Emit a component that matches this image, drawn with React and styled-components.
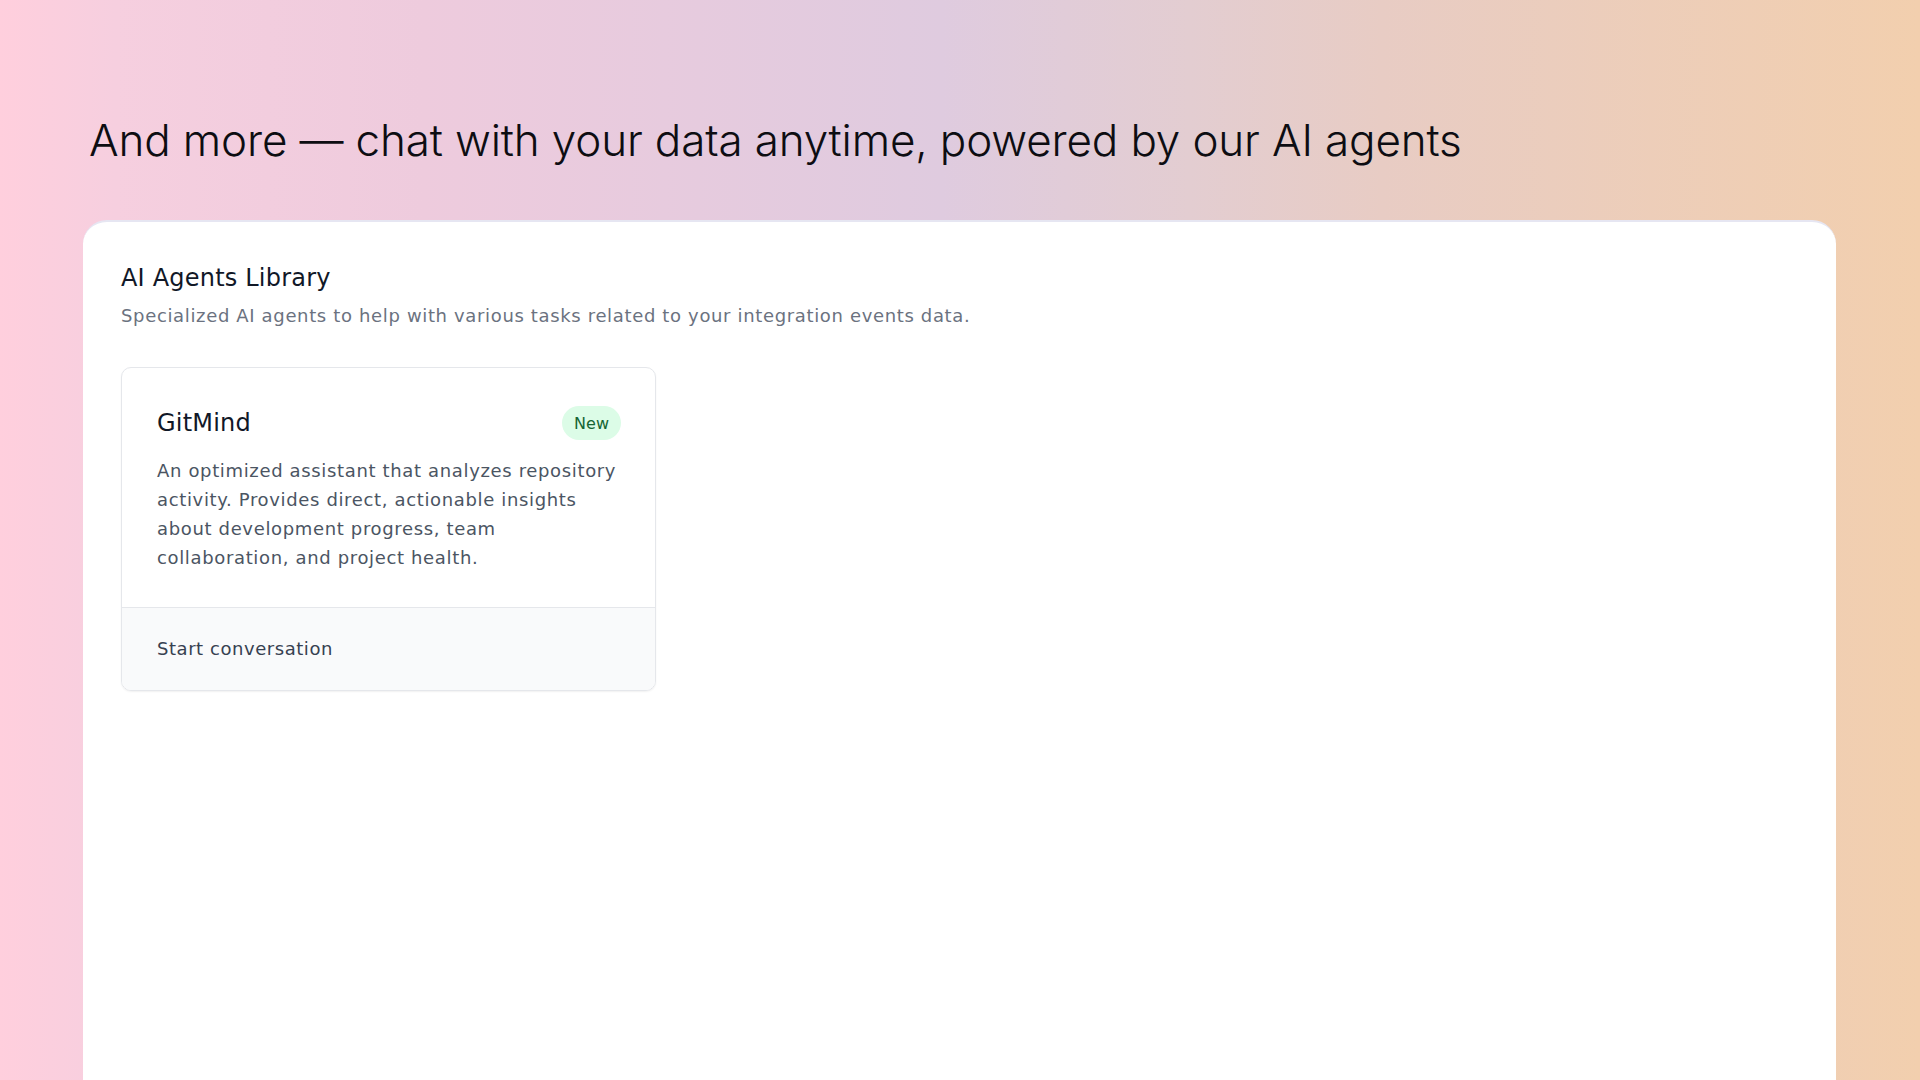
import { createGlobalStyle, styled } from "styled-components";

const GlobalStyle = createGlobalStyle`
  html, body {
    margin: 0;
    padding: 0;
  }
  body {
    font-family: "DejaVu Sans", "Noto Sans", sans-serif;
    -webkit-font-smoothing: antialiased;
  }
`;

const Page = styled.div`
  height: 100vh;
  overflow: hidden;
  box-sizing: border-box;
  padding: 0 84px 0 83px;
  background: linear-gradient(
    90deg,
    #ffcfdd 0%,
    #f6cfdf 6%,
    #eecbdd 22%,
    #dfcbdf 49%,
    #e3cdd1 62%,
    #e8ccc4 72%,
    #f2cfae 100%
  );
`;

const Headline = styled.h1`
  margin: 0;
  padding: 112px 0 0 6px;
  height: 108px;
  font-family: "Inter", sans-serif;
  font-weight: 300;
  font-size: 44px;
  line-height: 56px;
  letter-spacing: -0.15px;
  color: #0d0d12;
`;

const Panel = styled.section`
  background: #ffffff;
  border-top: 2px solid #e6e6f2;
  border-radius: 24px 24px 0 0;
  min-height: 900px;
  box-sizing: border-box;
  padding: 40px 38px 38px;
`;

const PanelTitle = styled.h2`
  margin: 0;
  font-size: 24px;
  line-height: 32px;
  font-weight: 400;
  letter-spacing: 0.2px;
  color: #111827;
`;

const PanelSubtitle = styled.p`
  margin: 8px 0 0;
  font-size: 18px;
  line-height: 28px;
  letter-spacing: 0.65px;
  color: #6b7280;
`;

const Grid = styled.div`
  display: grid;
  grid-template-columns: 535px;
  margin-top: 37px;
`;

const Card = styled.article`
  border: 1px solid #e5e7eb;
  border-radius: 10px;
  box-shadow: 0 1px 2px rgba(0, 0, 0, 0.06);
  overflow: hidden;
`;

const CardBody = styled.div`
  padding: 38px 34px 35px 35px;
`;

const CardHead = styled.div`
  display: flex;
  align-items: center;
  justify-content: space-between;
`;

const CardTitle = styled.h3`
  margin: 0;
  font-size: 24px;
  line-height: 34px;
  font-weight: 400;
  letter-spacing: 0.2px;
  color: #111827;
`;

const Badge = styled.span`
  display: inline-flex;
  align-items: center;
  height: 34px;
  padding: 0 12px;
  border-radius: 17px;
  background: #dcfce7;
  color: #166534;
  font-size: 16px;
`;

const Description = styled.p`
  margin: 16px 0 0;
  font-size: 18px;
  line-height: 29px;
  letter-spacing: 0.65px;
  color: #4b5563;
`;

const CardFooter = styled.div`
  border-top: 1px solid #e5e7eb;
  background: #f9fafb;
  padding: 29px 35px;
  font-size: 18px;
  line-height: 24px;
  letter-spacing: 0.55px;
  color: #374151;
`;

export default function App() {
  return (
    <>
      <GlobalStyle />
      <Page>
        <Headline>
          And more — chat with your data anytime, powered by our AI agents
        </Headline>
        <Panel>
          <PanelTitle>AI Agents Library</PanelTitle>
          <PanelSubtitle>
            Specialized AI agents to help with various tasks related to your
            integration events data.
          </PanelSubtitle>
          <Grid>
            <Card>
              <CardBody>
                <CardHead>
                  <CardTitle>GitMind</CardTitle>
                  <Badge>New</Badge>
                </CardHead>
                <Description>
                  An optimized assistant that analyzes repository activity.
                  Provides direct, actionable insights about development
                  progress, team collaboration, and project health.
                </Description>
              </CardBody>
              <CardFooter>Start conversation</CardFooter>
            </Card>
          </Grid>
        </Panel>
      </Page>
    </>
  );
}
